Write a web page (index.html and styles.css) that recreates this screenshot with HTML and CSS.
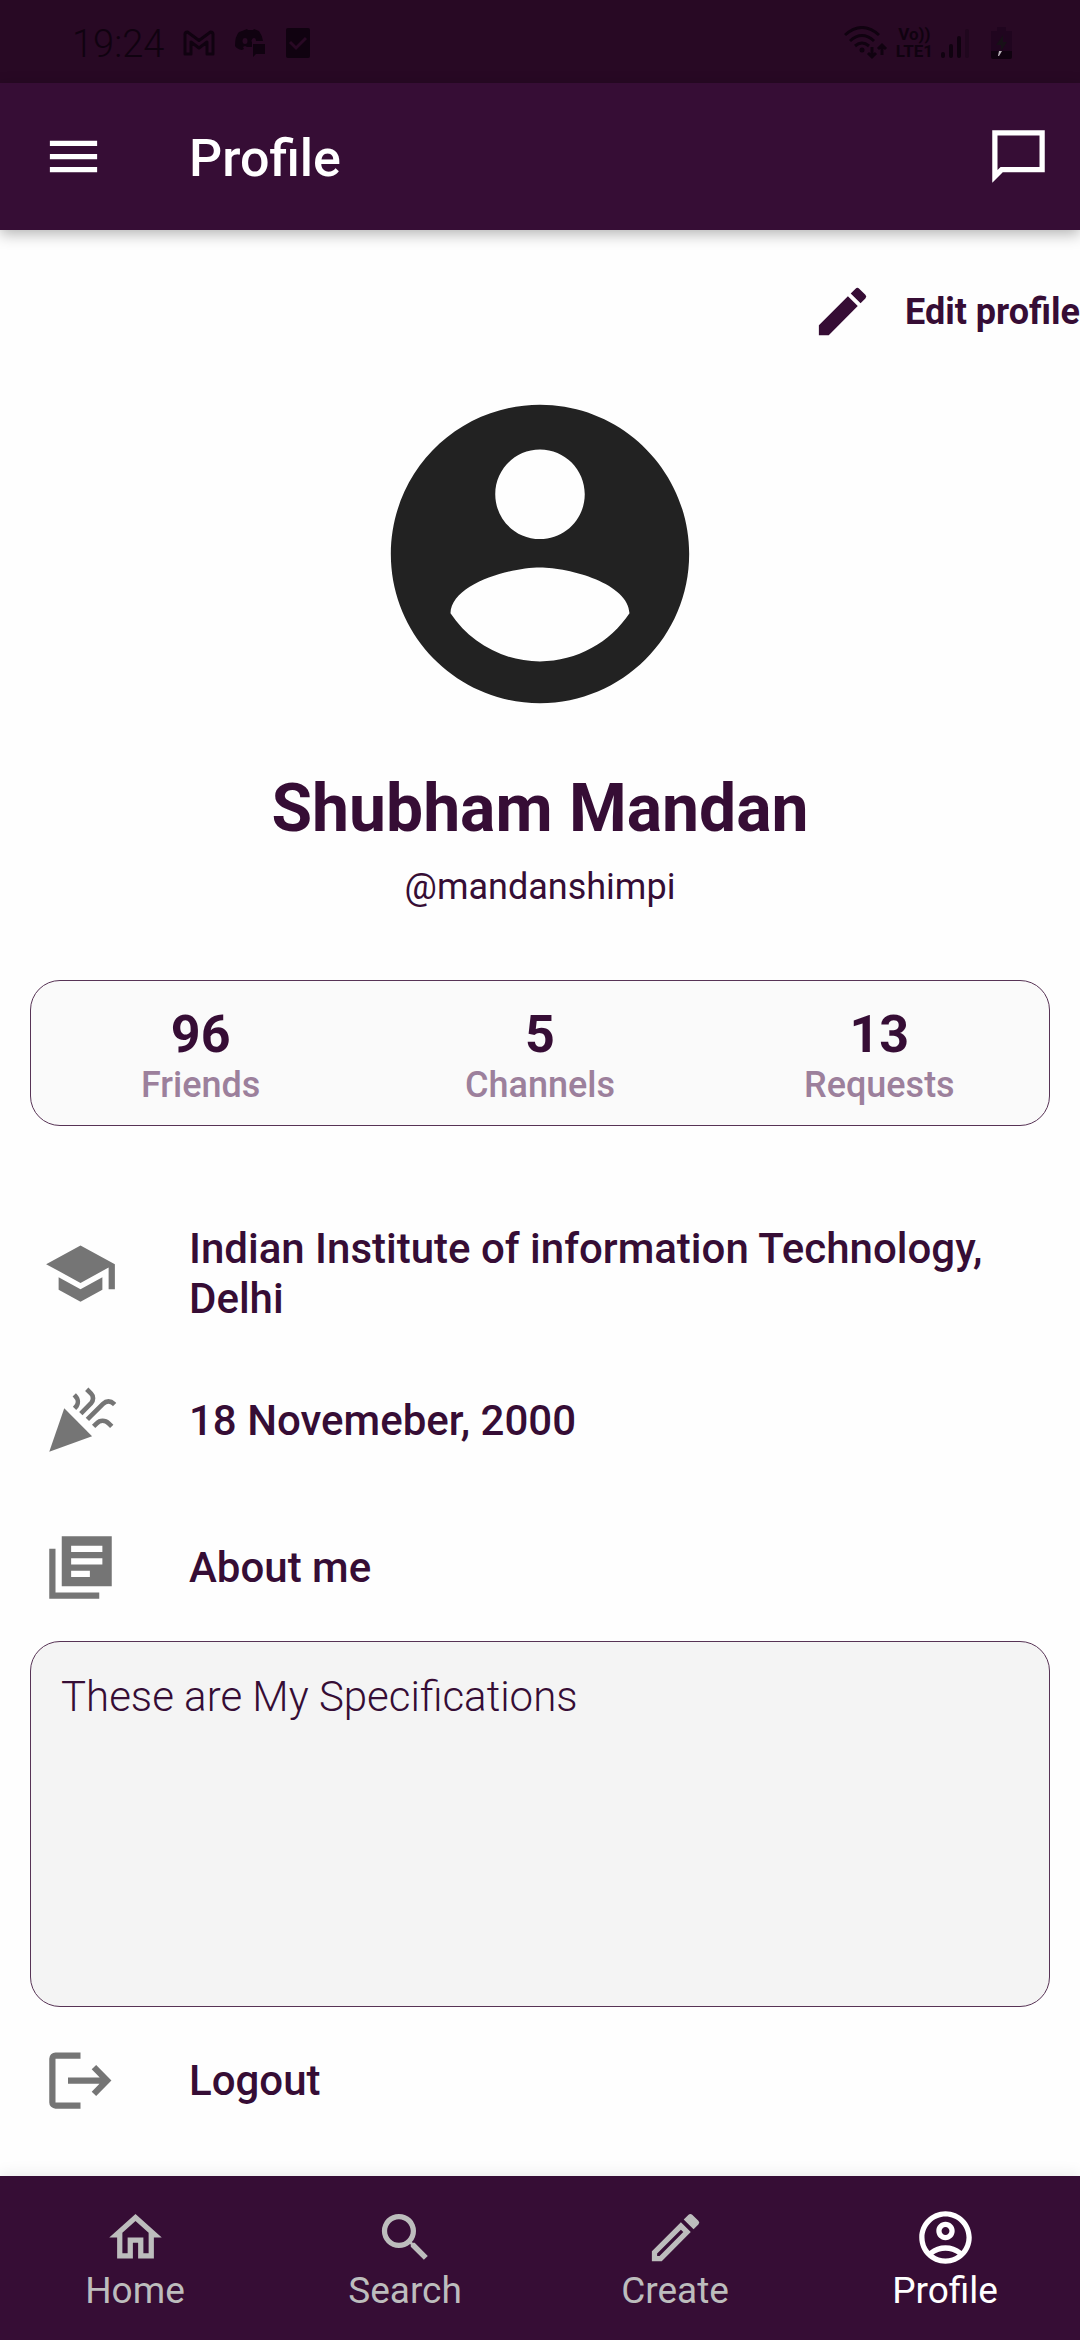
FILE: index.html
```html
<!DOCTYPE html>
<html lang="en">
<head>
<meta charset="utf-8">
<meta name="viewport" content="width=device-width, initial-scale=1">
<title>Profile</title>
<link rel="stylesheet" href="styles.css">
</head>
<body>
<div class="app">
  <div class="status-bar">
    <div class="status-group status-left">
      <span class="clock">19:24</span>
      <svg class="status-icon" width="32" height="26" viewBox="0 0 32 26" fill="none" stroke="currentColor" stroke-width="3" stroke-linejoin="round"><path d="M2 4.500Q2 2 4.500 2L16 10.500 27.500 2Q30 2 30 4.500V24H24V12L16 18 8 12V24H2z"/></svg>
      <svg class="status-icon" width="32" height="30" viewBox="0 0 32 30"><path fill="currentColor" d="M8 3L13 1 14 2H19L20 1 25 3Q28 7 29 13H18V19H13L11 18 9 19 10 21 8 22Q3 21 1 18 1 8 5 4z"/><ellipse cx="11" cy="13" rx="2.500" ry="3" fill="#280924"/><path d="M17 14Q18 10 20 10 22 10 22 13H18z" fill="#280924"/><path fill="currentColor" d="M19 16H31V26H22L19 29z"/></svg>
      <svg class="status-icon" width="26" height="32" viewBox="0 0 26 32"><rect x="1" y="1" width="24" height="30" rx="2" fill="currentColor"/><path d="M5 15l6 6L21 11" fill="none" stroke="#280924" stroke-width="3"/></svg>
    </div>
    <div class="status-group status-right">
      <svg width="44" height="34" viewBox="0 0 44 34" fill="none" stroke="currentColor" stroke-width="3"><path d="M1 9Q18-6 35 9M6 15Q18 4 30 15M11 20Q18 14 25 20"/><circle cx="18" cy="24" r="2.500" fill="currentColor" stroke="none"/><path d="M28 21V30M24 27l4 4 4-4M38 29V20M34 23l4-4 4 4"/></svg>
      <div class="volte"><span>Vo))</span><span>LTE1</span></div>
      <svg width="28" height="32" viewBox="0 0 28 32" fill="none" stroke="currentColor" stroke-width="4" stroke-linecap="round"><path d="M2 27v2M10 19v10M18 11v18"/><path d="M26 4v25" opacity=".3"/></svg>
      <svg class="battery" width="21" height="32" viewBox="0 0 21 32"><path d="M6 0h9v4h6v20H0V4h6z" fill="#20051f"/><path d="M0 24h21v6q0 2-2 2H2q-2 0-2-2z" fill="currentColor"/><path d="M12 8L5 18h5v6l6-9h-4z" fill="#171017"/><path d="M8 24h3l-3 5H7z" fill="#b8b0b8"/></svg>
    </div>
  </div>

  <header class="app-bar">
    <button class="icon-button" aria-label="Menu"><svg class="icon" viewBox="0 0 24 24"><path d="M3 18h18v-2H3v2zm0-5h18v-2H3v2zm0-7v2h18V6H3z"/></svg></button>
    <h1 class="title">Profile</h1>
    <button class="icon-button" aria-label="Messages"><svg class="icon" viewBox="0 0 24 24"><path d="M22 2H2v20l4-4h16V2zM20 16H5.170L4 17.170V4h16v12z"/></svg></button>
  </header>

  <main class="content">
    <button class="edit-button">
      <svg class="icon" viewBox="0 0 24 24"><path d="M3 17.250V21h3.750L17.810 9.940l-3.750-3.750L3 17.250zM20.710 7.040a.996.996 0 0 0 0-1.410l-2.340-2.340a.996.996 0 0 0-1.410 0l-1.830 1.830 3.750 3.750 1.830-1.830z"/></svg>
      <span>Edit profile</span>
    </button>

    <section class="identity">
      <svg class="avatar" viewBox="0 0 24 24"><path d="M12 2C6.480 2 2 6.480 2 12s4.480 10 10 10 10-4.480 10-10S17.520 2 12 2zm0 3c1.660 0 3 1.340 3 3s-1.340 3-3 3-3-1.340-3-3 1.340-3 3-3zm0 14.200c-2.500 0-4.710-1.280-6-3.220.03-1.990 4-3.080 6-3.080 1.990 0 5.970 1.090 6 3.080-1.290 1.940-3.500 3.220-6 3.220z"/></svg>
      <h2 class="name">Shubham Mandan</h2>
      <p class="handle">@mandanshimpi</p>
    </section>

    <dl class="stats">
      <div class="stat"><dt>Friends</dt><dd>96</dd></div>
      <div class="stat"><dt>Channels</dt><dd>5</dd></div>
      <div class="stat"><dt>Requests</dt><dd>13</dd></div>
    </dl>

    <div class="row">
      <svg class="row-icon" viewBox="0 0 24 24"><path d="M5 13.180v4L12 21l7-3.820v-4L12 17l-7-3.820zM12 3L1 9l11 6 9-4.910V17h2V9L12 3z"/></svg>
      <span>Indian Institute of information Technology, Delhi</span>
    </div>
    <div class="row">
      <svg class="row-icon" viewBox="0 0 24 24"><path d="M2 22L6.800 8.100l8.900 8.900z"/><g fill="none" stroke="currentColor" stroke-width="1.500"><path d="M10 3.800l.3.300C11.400 5.200 11.400 6.800 10.300 7.900l-.2.200"/><path d="M14 2l1.400 1.400C16.200 4.200 16.200 5.600 15.400 6.450L12.100 9.800"/><path d="M14.200 11.650L19.200 6.700C20.300 5.600 21.600 5.600 22.700 6.700l.2.200"/><path d="M16.200 13.900l1-1C18.200 11.800 19.900 11.800 21 12.900l1 1"/></g></svg>
      <span>18 Novemeber, 2000</span>
    </div>
    <div class="row">
      <svg class="row-icon" viewBox="0 0 24 24"><path d="M4 6H2v16h16v-2H4V6z"/><path d="M22 2H6v16h16V2zm-3 9H9V9h10v2zm-4 4H9v-2h6v2zm4-8H9V5h10v2z"/></svg>
      <label for="bio">About me</label>
    </div>
    <textarea class="bio" id="bio" readonly>These are My Specifications</textarea>
    <button class="row">
      <svg class="row-icon" viewBox="0 0 24 24"><path d="M12 3H4a2 2 0 0 0-2 2v14a2 2 0 0 0 2 2h8v-2H4V5h8z"/><path d="M8 12h12M16.300 7.700l4.200 4.300-4.200 4.300" fill="none" stroke="currentColor" stroke-width="2"/></svg>
      <span>Logout</span>
    </button>
  </main>

  <nav class="bottom-nav">
    <a class="nav-item" href="#home"><svg class="icon" viewBox="0 0 24 24"><path d="M12 5.690l5 4.500V18h-2v-6H9v6H7v-7.810l5-4.500M12 3L2 12h3v8h6v-6h2v6h6v-8h3L12 3z"/></svg><span>Home</span></a>
    <a class="nav-item" href="#search"><svg class="icon" viewBox="0 0 24 24"><path d="M15.500 14h-.79l-.28-.27A6.471 6.471 0 0 0 16 9.500 6.500 6.500 0 1 0 9.500 16c1.610 0 3.090-.59 4.230-1.570l.27.28v.79l5 4.990L20.490 19l-4.990-5zm-6 0C7.010 14 5 11.990 5 9.500S7.010 5 9.500 5 14 7.010 14 9.500 11.990 14 9.500 14z"/></svg><span>Search</span></a>
    <a class="nav-item" href="#create"><svg class="icon" viewBox="0 0 24 24"><path d="M14.060 9.020l.92.92L5.920 19H5v-.92l9.060-9.060M17.660 3c-.25 0-.51.1-.7.29l-1.830 1.830 3.750 3.750 1.830-1.830a.996.996 0 0 0 0-1.410l-2.340-2.340c-.2-.2-.45-.29-.71-.29zm-3.600 3.190L3 17.250V21h3.750L17.810 9.940l-3.750-3.750z"/></svg><span>Create</span></a>
    <a class="nav-item active" href="#profile" aria-current="page"><svg class="icon" viewBox="0 0 24 24"><path fill-rule="evenodd" d="M12 2C6.480 2 2 6.480 2 12s4.480 10 10 10 10-4.480 10-10S17.520 2 12 2zM7.350 18.500C8.660 17.560 10.260 17 12 17s3.340.56 4.650 1.500c-1.310.94-2.910 1.500-4.650 1.500s-3.340-.56-4.650-1.500zm10.790-1.380a9.947 9.947 0 0 0-12.280 0A7.957 7.957 0 0 1 4 12c0-4.420 3.580-8 8-8s8 3.580 8 8c0 1.950-.7 3.730-1.860 5.120z"/><path fill-rule="evenodd" d="M12 6c-1.930 0-3.500 1.570-3.500 3.500S10.070 13 12 13s3.500-1.570 3.500-3.500S13.930 6 12 6zm0 5c-.83 0-1.500-.67-1.500-1.500S11.170 8 12 8s1.500.67 1.500 1.500S12.830 11 12 11z"/></svg><span>Profile</span></a>
  </nav>
</div>
</body>
</html>
```
FILE: styles.css
```css
:root {
  --plum: #360d35;
  --plum-dark: #280924;
  --outline: #573355;
}

* {
  box-sizing: border-box;
}

body {
  margin: 0;
  background: #fefefe;
  color: var(--plum);
  font-family: Roboto, sans-serif;
}

h1, h2, p, dl, dd {
  margin: 0;
}

button {
  padding: 0;
  border: 0;
  background: none;
  color: inherit;
  font: inherit;
}

svg {
  display: block;
  flex: none;
}

.app {
  display: flex;
  flex-direction: column;
  min-height: 100vh;
}

.icon {
  width: 63px;
  height: 63px;
  fill: currentColor;
}

.status-bar {
  display: flex;
  justify-content: space-between;
  align-items: center;
  height: 83px;
  padding: 2px 68px 0 72px;
  background: var(--plum-dark);
  color: #100210;
}

.status-group {
  display: flex;
  align-items: center;
}

.status-left {
  gap: 19px;
}

.status-right {
  gap: 8px;
}

.battery {
  margin-left: 14px;
}

.clock {
  padding-top: 2px;
  font-size: 38px;
  font-weight: 300;
  line-height: 44px;
}

.volte {
  display: flex;
  flex-direction: column;
  align-items: center;
  font-size: 17px;
  font-weight: 700;
  line-height: 17px;
}

.app-bar {
  position: relative;
  display: flex;
  align-items: center;
  height: 147px;
  padding: 0 30px 0 42px;
  background: var(--plum);
  color: #fff;
  box-shadow: 0 4px 14px rgba(0, 0, 0, .3);
}

.title {
  flex: 1;
  padding: 4px 0 0 84px;
  font-size: 52px;
  font-weight: 500;
  line-height: 62px;
}

.content {
  flex: 1;
  display: flex;
  flex-direction: column;
  padding-bottom: 22px;
}

.edit-button {
  display: flex;
  align-items: center;
  align-self: flex-end;
  gap: 31px;
  margin-top: 50px;
  font-size: 36px;
  font-weight: 700;
}

.identity {
  display: flex;
  flex-direction: column;
  align-items: center;
  margin-top: 32px;
  text-align: center;
}

.avatar {
  width: 358px;
  height: 358px;
  fill: #222;
}

.name {
  margin-top: 36px;
  font-size: 66px;
  font-weight: 700;
  line-height: 80px;
}

.handle {
  margin-top: 16px;
  font-size: 36px;
  line-height: 44px;
}

.stats {
  display: grid;
  grid-template-columns: repeat(3, 1fr);
  margin: 71px 30px 74px;
  padding: 24px 0 20px;
  border: 1px solid var(--outline);
  border-radius: 30px;
  background: #fafafa;
}

.stat {
  display: flex;
  flex-direction: column-reverse;
  align-items: center;
}

.stat dd {
  font-size: 52px;
  font-weight: 700;
  line-height: 60px;
}

.stat dt {
  color: #9c809c;
  font-size: 36px;
  font-weight: 500;
  line-height: 40px;
}

.row {
  display: flex;
  align-items: center;
  gap: 71px;
  min-height: 147px;
  padding: 0 42px 0 43px;
  font-size: 42px;
  font-weight: 500;
  line-height: 50px;
  text-align: left;
}

.row-icon {
  width: 75px;
  height: 75px;
  color: #757575;
  fill: currentColor;
}

.bio {
  height: 366px;
  margin: 0 30px;
  padding: 30px;
  border: 1px solid var(--outline);
  border-radius: 30px;
  outline: 0;
  background: #f4f4f4;
  color: inherit;
  font: 300 42px/50px Roboto, sans-serif;
  resize: none;
}

.bottom-nav {
  display: grid;
  grid-template-columns: repeat(4, 1fr);
  padding: 30px 0 27px;
  background: var(--plum);
  box-shadow: 0 0 16px rgba(0, 0, 0, .1);
}

.nav-item {
  display: flex;
  flex-direction: column;
  align-items: center;
  color: #bdbdbd;
  font-size: 37px;
  line-height: 44px;
  text-decoration: none;
}

.nav-item.active {
  color: #fff;
}
```
